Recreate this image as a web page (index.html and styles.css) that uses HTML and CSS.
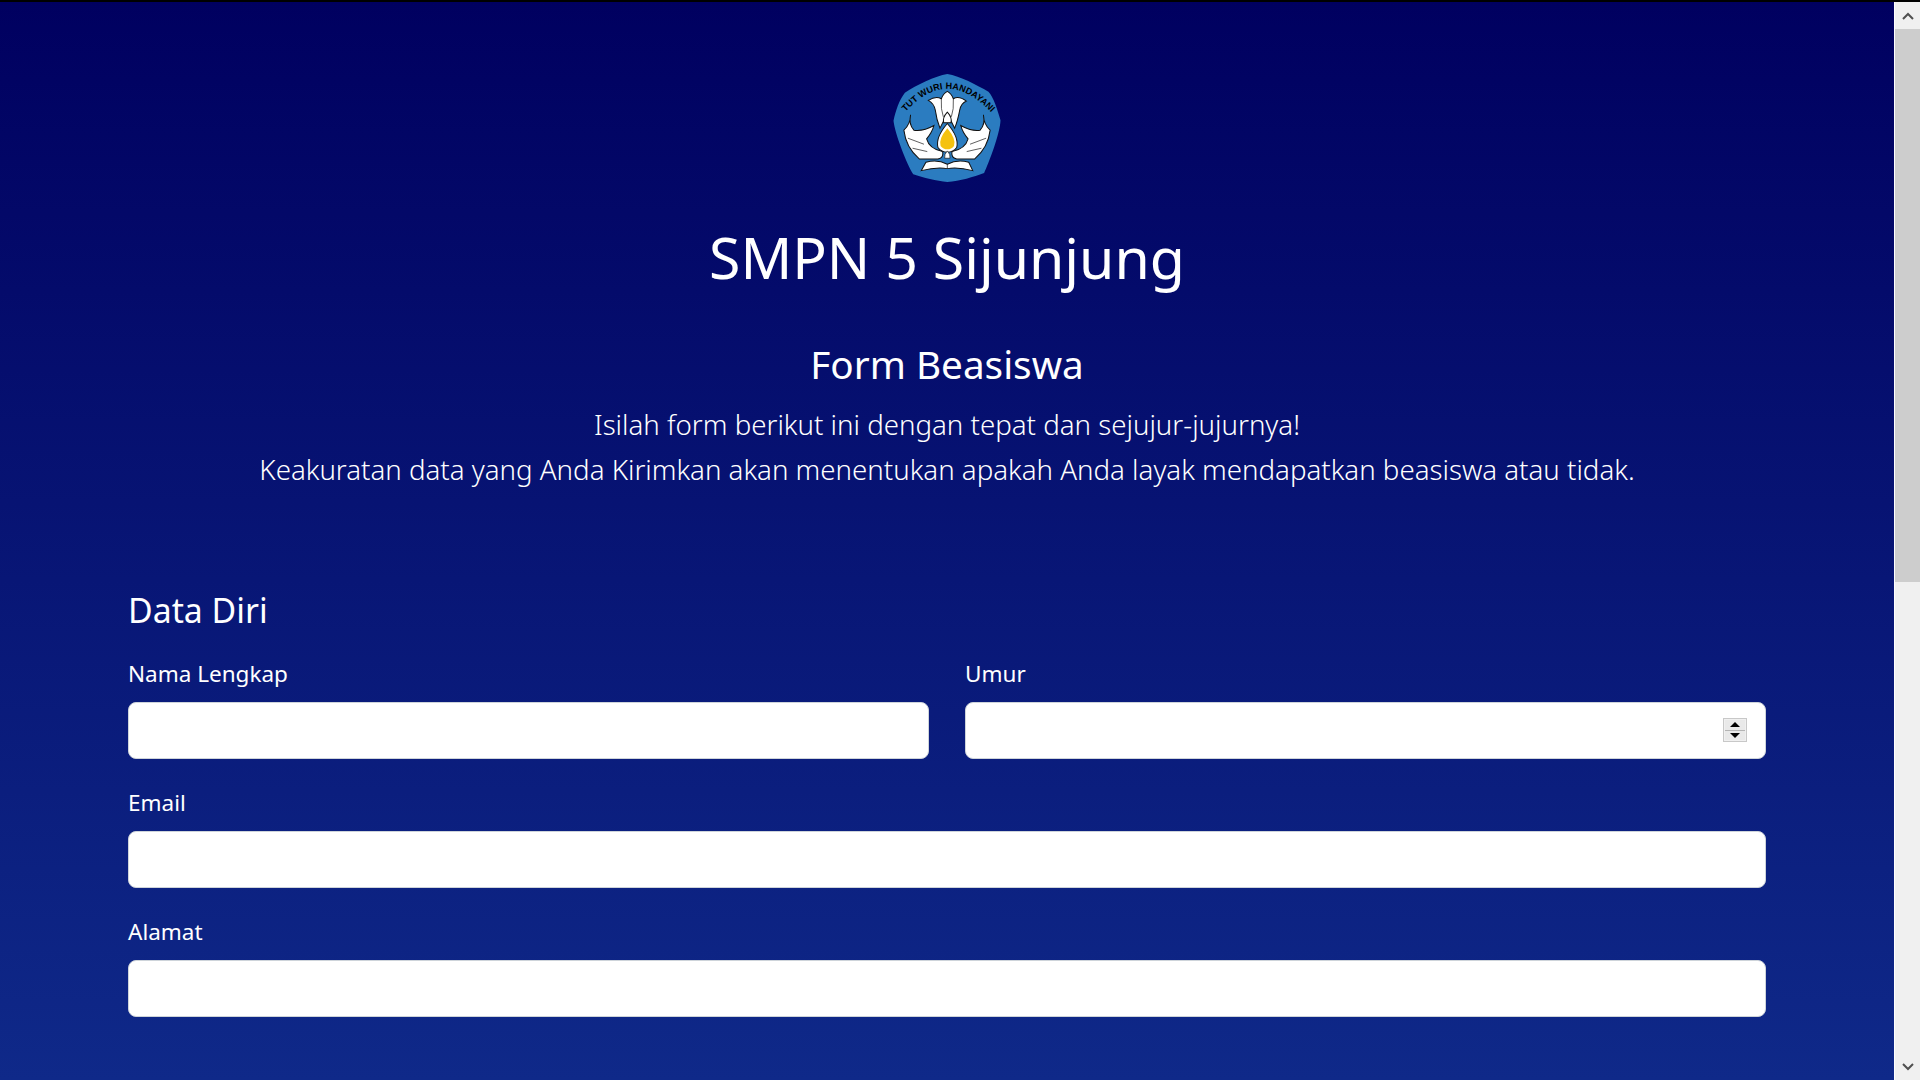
FILE: index.html
```html
<!DOCTYPE html>
<html lang="id">
<head>
  <meta charset="UTF-8">
  <title>Form Beasiswa</title>
  <link rel="stylesheet" href="styles.css">
</head>
<body>
<div class="topline"></div>
<div class="window">
  <div class="page">
    <div class="header">
      <svg class="logo" viewBox="100 72 322 323" aria-label="Logo Tut Wuri Handayani">
        <path fill="#2b7cc0" d="M262 72 C300 78 350 105 385 125 C400 140 412 180 421 210 C420 250 385 340 372 368 C340 380 300 392 262 395 C230 392 190 382 160 372 C140 340 105 250 101 212 C108 180 118 150 135 128 C170 105 225 78 262 72 Z"/>
        <path id="arc" fill="none" d="M136 186 Q262 46 394 188"/>
        <text class="logo-text"><textPath href="#arc" startOffset="50%" text-anchor="middle" textLength="300" lengthAdjust="spacing">TUT WURI HANDAYANI</textPath></text>
        <!-- bulu tengah -->
        <path fill="#fff" stroke="#111" stroke-width="3" d="M205 151 Q228 136 244 146 Q250 130 262 124 Q274 130 280 146 Q296 136 319 153 Q303 160 299 180 Q293 212 284 234 L262 190 L240 234 Q230 210 226 180 Q222 160 205 151 Z"/>
        <path fill="none" stroke="#111" stroke-width="2" d="M244 146 Q242 178 250 200 M280 146 Q282 178 274 200"/>
        <path fill="#fff" stroke="#111" stroke-width="3" d="M262 186 Q277 202 273 218 L251 218 Q247 202 262 186 Z"/>
        <!-- sayap kiri -->
        <path fill="#fff" stroke="#111" stroke-width="3" d="M152 194 Q152 222 132 240 Q138 292 178 326 L234 326 Q252 322 248 304 Q208 296 200 266 Q216 248 222 226 Q190 244 162 240 Q146 222 152 194 Z"/>
        <!-- sayap kanan -->
        <path fill="#fff" stroke="#111" stroke-width="3" d="M370 194 Q370 222 390 240 Q384 292 344 326 L290 326 Q272 322 276 304 Q316 296 324 266 Q308 248 302 226 Q334 244 360 240 Q376 222 370 194 Z"/>
        <path fill="none" stroke="#111" stroke-width="2" d="M144 264 L192 282 M158 294 L202 304 M378 264 L330 282 M364 294 L320 304"/>
        <!-- nyala -->
        <path fill="#fff" stroke="#111" stroke-width="3" d="M262 220 Q298 262 290 292 Q280 306 262 306 Q244 306 234 292 Q226 262 262 220 Z"/>
        <path fill="#f5c20f" d="M262 234 Q290 268 282 287 Q274 297 262 297 Q250 297 242 287 Q234 268 262 234 Z"/>
        <path fill="#fff" stroke="#111" stroke-width="2" d="M262 302 Q272 312 270 324 L254 324 Q252 312 262 302 Z"/>
        <!-- buku -->
        <path fill="#fff" stroke="#111" stroke-width="3" d="M198 336 Q232 326 262 342 Q292 326 326 336 L338 361 Q296 350 262 355 Q228 350 184 361 Z"/>
        <path fill="none" stroke="#111" stroke-width="2" d="M262 342 L262 355"/>
      </svg>
      <h1 class="school">SMPN 5 Sijunjung</h1>
      <h2 class="form-title">Form Beasiswa</h2>
      <p class="lead">Isilah form berikut ini dengan tepat dan sejujur-jujurnya!<br>Keakuratan data yang Anda Kirimkan akan menentukan apakah Anda layak mendapatkan beasiswa atau tidak.</p>
    </div>

    <form class="form">
      <h3 class="section">Data Diri</h3>
      <div class="row">
        <div class="field">
          <label for="nama">Nama Lengkap</label>
          <input type="text" id="nama">
        </div>
        <div class="field">
          <label for="umur">Umur</label>
          <div class="number-wrap">
            <input type="text" id="umur">
            <div class="spinner">
              <span class="spin"><i class="arrow-up"></i></span>
              <span class="spin"><i class="arrow-down"></i></span>
            </div>
          </div>
        </div>
      </div>
      <div class="field">
        <label for="email">Email</label>
        <input type="text" id="email">
      </div>
      <div class="field">
        <label for="alamat">Alamat</label>
        <input type="text" id="alamat">
      </div>
    </form>
  </div>

  <div class="scrollbar">
    <div class="scroll-btn"><svg viewBox="0 0 12 8"><path d="M1 7 L6 2 L11 7" fill="none" stroke="#505050" stroke-width="2"/></svg></div>
    <div class="scroll-thumb"></div>
    <div class="scroll-track"></div>
    <div class="scroll-btn"><svg viewBox="0 0 12 8"><path d="M1 1 L6 6 L11 1" fill="none" stroke="#505050" stroke-width="2"/></svg></div>
  </div>
</div>
</body>
</html>
```

FILE: styles.css
```css
* {
  margin: 0;
  padding: 0;
  box-sizing: border-box;
}

html, body {
  height: 1080px;
  overflow: hidden;
}

body {
  display: flex;
  flex-direction: column;
  font-family: "Noto Sans", "Open Sans", sans-serif;
  color: #fff;
}

.topline {
  height: 2px;
  background-color: #000;
}

.window {
  flex: 1;
  display: flex;
  min-height: 0;
}

.page {
  flex: 1;
  padding: 0 128px;
  overflow: hidden;
  background: linear-gradient(180deg, #000060 0%, #0f2989 100%);
}

.header {
  padding-top: 72px;
  text-align: center;
}

.logo {
  display: block;
  width: 108px;
  height: 108px;
  margin: 0 auto;
}

.logo-text {
  font-family: "Liberation Sans", sans-serif;
  font-size: 27px;
  font-weight: 700;
  fill: #000;
}

.school {
  margin-top: 39px;
  font-size: 57.2px;
  font-weight: 400;
  line-height: 72px;
}

.form-title {
  margin-top: 45px;
  font-size: 38.7px;
  font-weight: 400;
  line-height: 52px;
}

.lead {
  margin-top: 12px;
  font-size: 27.66px;
  font-weight: 300;
  line-height: 45px;
}

.form {
  margin-top: 96px;
}

.section {
  font-size: 33.8px;
  font-weight: 400;
  line-height: 44px;
}

.row {
  display: grid;
  grid-template-columns: 801px 801px;
  column-gap: 36px;
}

.field label {
  display: block;
  height: 28px;
  margin-bottom: 14px;
  font-size: 22.5px;
  line-height: 28px;
}

.row .field {
  margin-top: 28px;
}

.form > .field {
  margin-top: 30px;
}

.field input {
  display: block;
  width: 100%;
  height: 57px;
  border: 1px solid #ced4da;
  border-radius: 8px;
  background-color: #fff;
}

.number-wrap {
  position: relative;
}

.spinner {
  position: absolute;
  top: 16px;
  right: 19px;
  width: 24px;
  height: 24px;
  padding: 1px;
  display: flex;
  flex-direction: column;
  background-color: #f0f0f0;
  border: 1px solid #c8c8c8;
}

.spin {
  flex: 1;
  display: flex;
  align-items: center;
  justify-content: center;
  background-color: #e9e9e9;
}

.spin + .spin {
  border-top: 1px solid #b4b4b4;
}

.arrow-up, .arrow-down {
  width: 0;
  height: 0;
  border-left: 5px solid transparent;
  border-right: 5px solid transparent;
}

.arrow-up {
  border-bottom: 5px solid #000;
}

.arrow-down {
  border-top: 5px solid #000;
}

.scrollbar {
  width: 26px;
  display: flex;
  flex-direction: column;
  background-color: #f0f0f0;
  border-left: 1px solid #fff;
}

.scroll-btn {
  height: 27px;
  display: flex;
  align-items: center;
  justify-content: center;
}

.scroll-btn svg {
  width: 12px;
  height: 8px;
}

.scroll-thumb {
  height: 553px;
  background-color: #cdcdcd;
}

.scroll-track {
  flex: 1;
}
```
